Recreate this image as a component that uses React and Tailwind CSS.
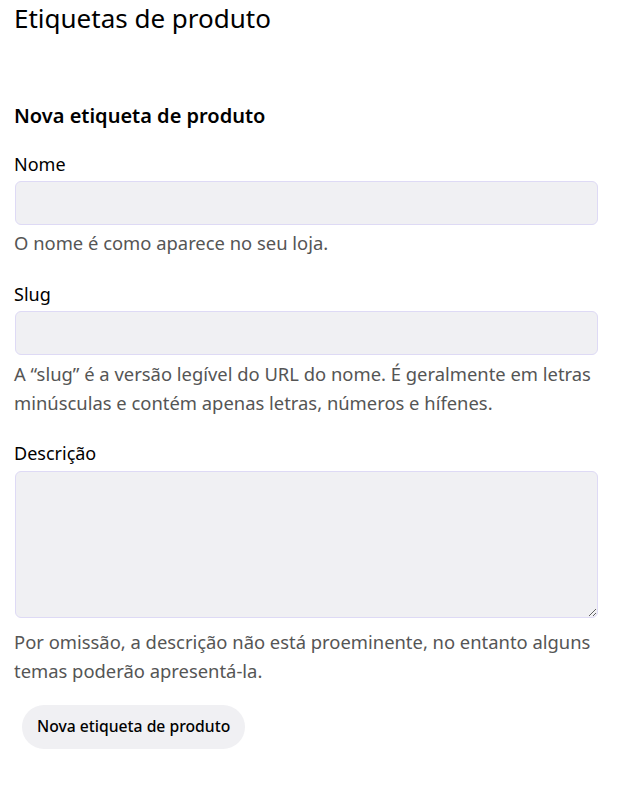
export default function App() {
  const font = { fontFamily: '"Segoe UI", "Noto Sans", "Open Sans", sans-serif' };
  return (
    <div className="bg-white min-h-[799px] w-[627px] pl-[14px] pr-[29px] text-[#1e1e1e]" style={font}>
      <h1 className="text-[26px] leading-[36px] pt-0 font-normal text-black">Etiquetas de produto</h1>
      <h2 className="mt-[65px] text-[20px] leading-[30px] font-semibold text-black">Nova etiqueta de produto</h2>
      <div className="mt-[20px]">
        <label className="block text-[18px] leading-[26px] text-black">Nome</label>
        <input className="mt-[4px] ml-px block w-[583px] h-[44px] rounded-[6px] border border-[#dedaf5] bg-[#f0f0f3]" />
        <p className="mt-[4px] text-[18.4px] leading-[28px] text-[#555]">O nome é como aparece no seu loja.</p>
      </div>
      <div className="mt-[24px]">
        <label className="block text-[18px] leading-[26px] text-black">Slug</label>
        <input className="mt-[4px] ml-px block w-[583px] h-[44px] rounded-[6px] border border-[#dedaf5] bg-[#f0f0f3]" />
        <p className="mt-[4px] text-[18.4px] leading-[29px] text-[#555]">A “slug” é a versão legível do URL do nome. É geralmente em letras minúsculas e contém apenas letras, números e hífenes.</p>
      </div>
      <div className="mt-[23px]">
        <label className="block text-[18px] leading-[26px] text-black">Descrição</label>
        <textarea className="mt-[5px] ml-px block w-[583px] h-[147px] rounded-[6px] border border-[#dedaf5] bg-[#f0f0f3]" />
        <p className="mt-[9px] text-[18.4px] leading-[29px] text-[#555]">Por omissão, a descrição não está proeminente, no entanto alguns temas poderão apresentá-la.</p>
      </div>
      <button className="mt-[20px] ml-[8px] h-[44px] px-[15px] rounded-full bg-[#f0f0f3] text-[15.7px] font-medium text-black">Nova etiqueta de produto</button>
    </div>
  );
}
